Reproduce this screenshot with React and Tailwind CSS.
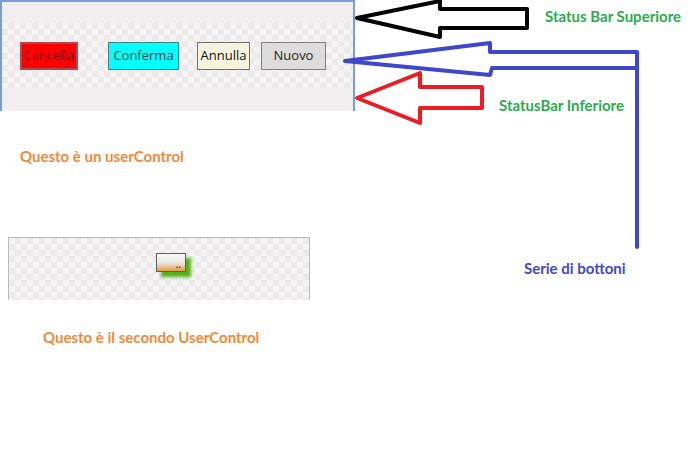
import React from "react";

const checker =
  "bg-[repeating-conic-gradient(#ebe9e9_0_25%,#f5f3f3_0_50%)] bg-[length:12px_12px]";

const label = "absolute text-[15px] font-bold leading-[18px] whitespace-nowrap";

function FormButton({ children, className }) {
  return (
    <button
      className={
        "h-[28px] border text-[13px] leading-none flex items-center justify-center " +
        className
      }
    >
      {children}
    </button>
  );
}

/* ================= ANNOTATION ARROWS ================= */
function Arrows() {
  return (
    <svg
      className="absolute left-0 top-0 pointer-events-none"
      width="696"
      height="470"
      viewBox="0 0 696 470"
    >
      <polygon
        points="357,18 440,1 440,9 527,9 527,28 440,28 440,37"
        fill="none"
        stroke="#000"
        strokeWidth="4"
        strokeLinejoin="round"
      />
      <polygon
        points="345,61 490,43 490,52 637,52 637,68 492,68 490,75"
        fill="none"
        stroke="#3f48cc"
        strokeWidth="4"
        strokeLinejoin="round"
      />
      <line x1="637" y1="54" x2="637" y2="247" stroke="#3f48cc" strokeWidth="4" strokeLinecap="round" />
      <polygon
        points="357,98 420,73 420,87 482,87 482,108 420,108 420,123"
        fill="none"
        stroke="#ed1c24"
        strokeWidth="4"
        strokeLinejoin="round"
      />
    </svg>
  );
}

export default function App() {
  return (
    <div
      className="relative w-[696px] h-[470px] bg-white overflow-hidden"
      style={{ fontFamily: "'Open Sans', sans-serif" }}
    >
      {/* FIRST USER CONTROL */}
      <div className="w-[355px] h-[111px] border-l-2 border-t-2 border-r-2 border-[#7a9cd8] bg-[#f0eeee] flex flex-col">
        <div className="h-[21px]" />
        <div className={"h-[65px] flex items-center pl-[18px] " + checker}>
          <FormButton className="w-[58px] bg-[#ff0000] border-[#a84c4c] border-2 text-[#6a0000]">
            Cancella
          </FormButton>
          <FormButton className="w-[71px] ml-[30px] bg-[#00ffff] border-[#3f8585] text-[#1e3c3c]">
            Conferma
          </FormButton>
          <FormButton className="w-[53px] ml-[18px] bg-[#f6f4de] border-[#707070] text-[#111]">
            Annulla
          </FormButton>
          <FormButton className="w-[65px] ml-[11px] bg-[#dcdcdc] border-[#808080] text-[#222]">
            Nuovo
          </FormButton>
        </div>
      </div>

      <div
        className="ml-[20px] mt-[36px] text-[15px] font-bold leading-[18px] text-[#f08a3a]"
        style={{ fontFamily: "Lato, sans-serif" }}
      >
        Questo è un userControl
      </div>

      {/* SECOND USER CONTROL */}
      <div className={"ml-[8px] mt-[72px] w-[302px] h-[63px] border-x border-t border-[#b9b9b9] pl-[147px] pt-[15px] " + checker}>
        <button className="w-[30px] h-[19px] border border-[#5e5e5e] bg-linear-to-b from-[#f7f7f7] via-[#ebe7e2] to-[#e49a3a] shadow-[5px_5px_3px_#53b21c] flex items-end justify-end pr-[4px] text-[9px] font-bold leading-[12px] text-[#333]">
          ..
        </button>
      </div>

      <div
        className="ml-[43px] mt-[28px] text-[15px] font-bold leading-[18px] text-[#f08a3a]"
        style={{ fontFamily: "Lato, sans-serif" }}
      >
        Questo è il secondo UserControl
      </div>

      <Arrows />

      <div className={label + " left-[545px] top-[7px] text-[#2eaa4f]"} style={{ fontFamily: "Lato, sans-serif" }}>
        Status Bar Superiore
      </div>
      <div className={label + " left-[499px] top-[96px] text-[#2eaa4f]"} style={{ fontFamily: "Lato, sans-serif" }}>
        StatusBar Inferiore
      </div>
      <div className={label + " left-[524px] top-[259px] text-[#3f48cc]"} style={{ fontFamily: "Lato, sans-serif" }}>
        Serie di bottoni
      </div>
    </div>
  );
}
